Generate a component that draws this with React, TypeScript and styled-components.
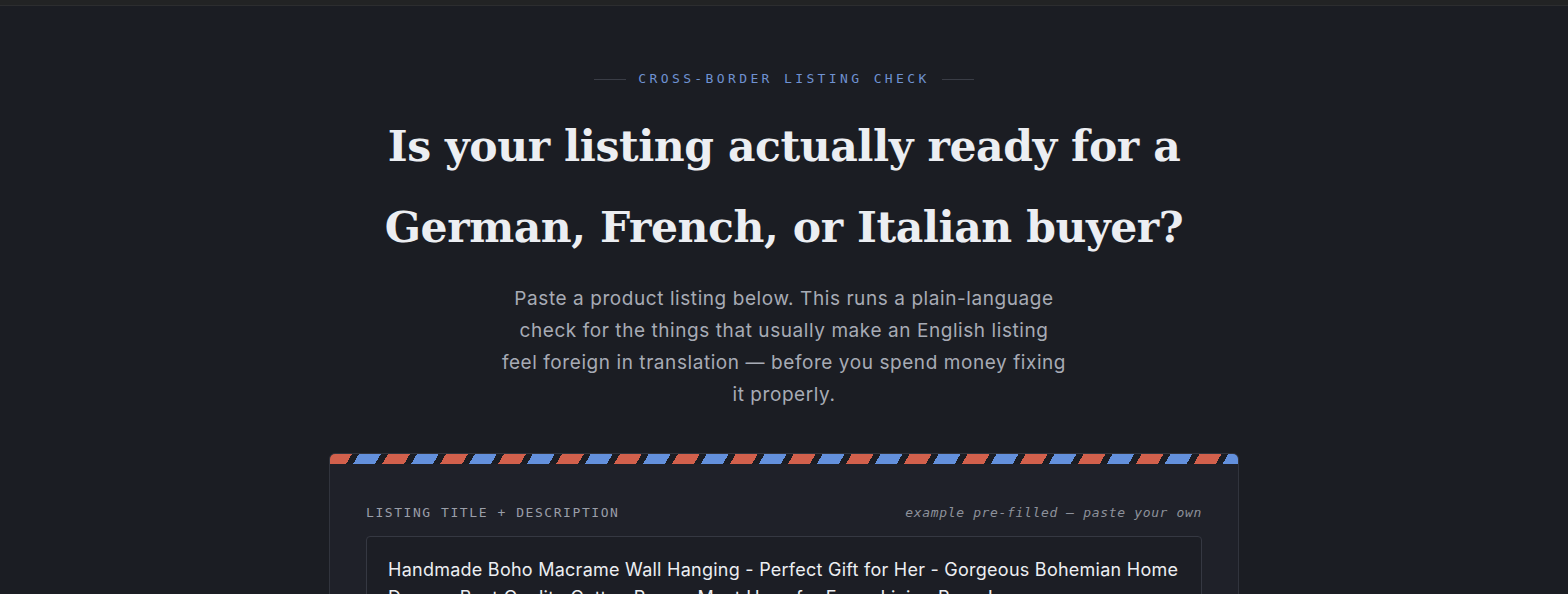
import styled, { createGlobalStyle } from 'styled-components';

const GlobalStyle = createGlobalStyle`
	html, body {
		margin: 0;
		padding: 0;
		background: #1b1d23;
	}
	body {
		font-family: 'Inter', 'Noto Sans', sans-serif;
		color: #e8e9ec;
	}
`;

const sample =
	'Handmade Boho Macrame Wall Hanging - Perfect Gift for Her - Gorgeous Bohemian Home Decor - Best Quality Cotton Rope - Must Have for Every Living Room!\n\nThis amazing macrame wall hanging is a total game-changer for your space.';

const App = () => {
	return (
		<>
			<GlobalStyle />
			<TopBar />
			<Main>
				<Eyebrow>
					<EyebrowLine />
					<span>Cross-border listing check</span>
					<EyebrowLine />
				</Eyebrow>
				<Heading>
					Is your listing actually ready for a
					<br />
					German, French, or Italian buyer?
				</Heading>
				<Lead>
					Paste a product listing below. This runs a plain-language check for the things that usually
					make an English listing feel foreign in translation — before you spend money fixing it
					properly.
				</Lead>
				<Card>
					<AirmailStripe />
					<CardBody>
						<FieldHeader>
							<FieldLabel htmlFor="listing">Listing title + description</FieldLabel>
							<FieldHint>example pre-filled — paste your own</FieldHint>
						</FieldHeader>
						<ListingInput id="listing" defaultValue={sample} spellCheck={false} />
					</CardBody>
				</Card>
			</Main>
		</>
	);
};

export default App;

const TopBar = styled.div`
	height: 5px;
	background: #222324;
	border-bottom: 1px solid #2c2d2f;
`;

const Main = styled.main`
	display: flex;
	flex-direction: column;
	align-items: center;
	padding-top: 63px;
`;

const Eyebrow = styled.div`
	display: flex;
	align-items: center;
	gap: 12px;
	font-family: 'DejaVu Sans Mono', 'Liberation Mono', monospace;
	font-size: 13px;
	letter-spacing: 0.26em;
	text-transform: uppercase;
	color: #6f92d2;
	line-height: 20px;
`;

const EyebrowLine = styled.span`
	display: block;
	width: 32px;
	height: 1px;
	background: #3a3d46;
`;

const Heading = styled.h1`
	margin: 17px 0 0;
	font-family: 'DejaVu Serif', 'Liberation Serif', serif;
	font-weight: 700;
	font-size: 42.5px;
	line-height: 81px;
	letter-spacing: -0.01em;
	text-align: center;
	color: #eceef2;
`;

const Lead = styled.p`
	margin: 15px 0 0;
	max-width: 567px;
	font-size: 19px;
	line-height: 32px;
	letter-spacing: 0.03em;
	text-align: center;
	color: #a7abb5;
`;

const Card = styled.section`
	margin-top: 42px;
	width: 908px;
	background: #1f2129;
	border: 1px solid #31343d;
	border-radius: 6px;
	overflow: hidden;
`;

const AirmailStripe = styled.div`
	height: 10px;
	background: repeating-linear-gradient(
		120deg,
		#d2604c 0 19px,
		#1b1d23 19px 25px,
		#6390dc 25px 44px,
		#1b1d23 44px 50.2px
	);
`;

const CardBody = styled.div`
	display: flex;
	flex-direction: column;
	gap: 16px;
	padding: 41px 36px 40px;
`;

const FieldHeader = styled.div`
	display: flex;
	justify-content: space-between;
	align-items: baseline;
`;

const FieldLabel = styled.label`
	font-family: 'DejaVu Sans Mono', 'Liberation Mono', monospace;
	font-size: 13px;
	letter-spacing: 0.12em;
	text-transform: uppercase;
	color: #9a9ea8;
`;

const FieldHint = styled.span`
	font-family: 'DejaVu Sans Mono', 'Liberation Mono', monospace;
	font-style: italic;
	font-size: 13px;
	letter-spacing: 0.05em;
	color: #8d919b;
`;

const ListingInput = styled.textarea`
	box-sizing: border-box;
	width: 100%;
	height: 220px;
	padding: 19px 21px 20px;
	resize: vertical;
	background: #1c1e25;
	border: 1px solid #353842;
	border-radius: 4px;
	font-family: 'Inter', 'Noto Sans', sans-serif;
	font-size: 18px;
	line-height: 28px;
	letter-spacing: 0.014em;
	color: #eceef2;
	outline: none;
`;
